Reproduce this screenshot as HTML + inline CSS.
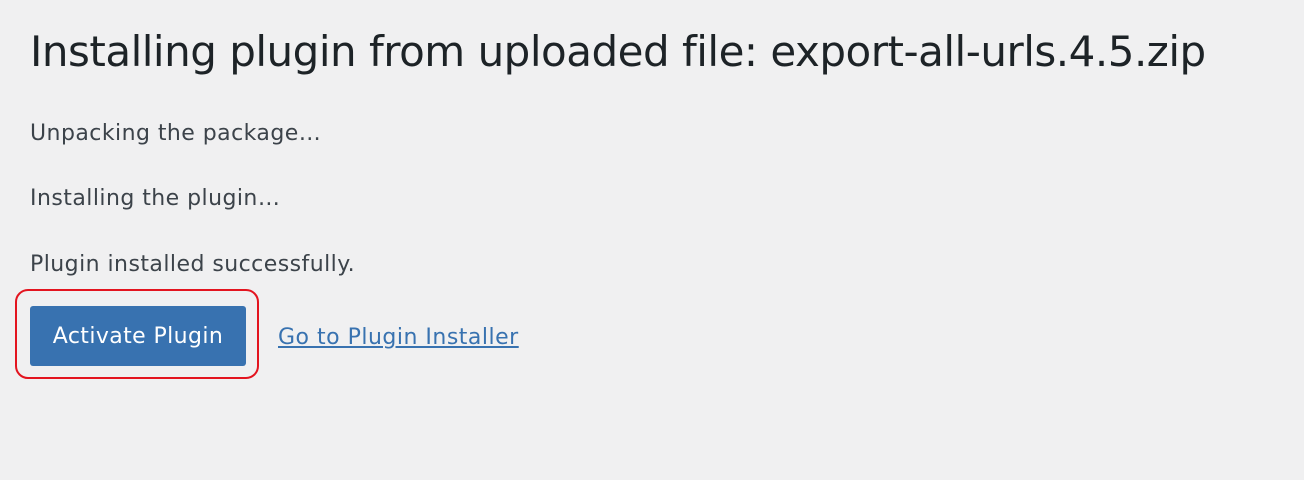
<!DOCTYPE html>
<html><head><style>
body{margin:0;background:#f0f0f1;width:1304px;height:480px;overflow:hidden;font-family:"DejaVu Sans",sans-serif;color:#3c434a;}
h1{position:absolute;left:30px;top:26px;margin:0;font-weight:400;font-size:42px;line-height:52px;color:#1d2327;letter-spacing:-0.5px;white-space:nowrap;}
p{position:absolute;left:30px;margin:0;font-size:22px;line-height:26px;white-space:nowrap;letter-spacing:0.45px;}
.btn{position:absolute;left:30px;top:306px;width:216px;height:60px;background:#3872b0;border-radius:3px;color:#fff;font-size:22px;line-height:62px;text-align:center;letter-spacing:0.4px;}
.ring{position:absolute;left:15px;top:289px;width:240px;height:86px;border:2px solid #e3141f;border-radius:13px;}
a{position:absolute;left:278px;top:324px;font-size:22px;line-height:28px;color:#3872b0;text-decoration:underline;letter-spacing:0.5px;white-space:nowrap;}
</style></head><body>
<h1>Installing plugin from uploaded file: export-all-urls.4.5.zip</h1>
<p style="top:121px">Unpacking the package…</p>
<p style="top:186px">Installing the plugin…</p>
<p style="top:252px">Plugin installed successfully.</p>
<div class="ring"></div>
<div class="btn">Activate Plugin</div>
<a>Go to Plugin Installer</a>
</body></html>
